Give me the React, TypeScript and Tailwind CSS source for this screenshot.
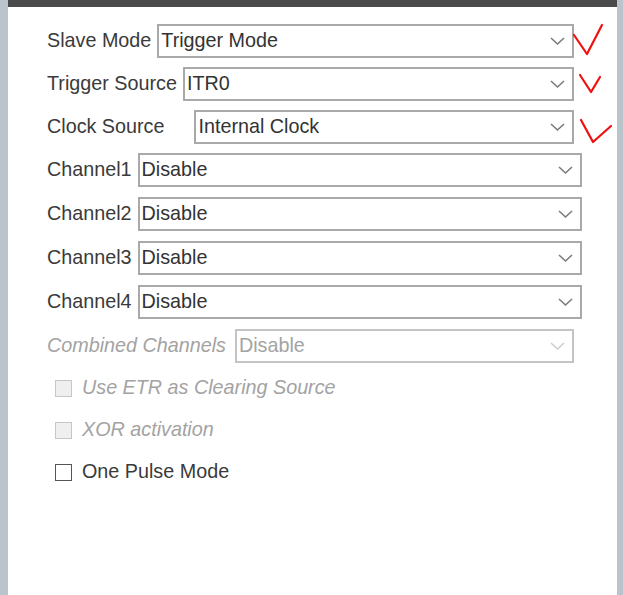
import React from "react";

type Tick = { points: string };

function Chevron({ disabled }: { disabled?: boolean }) {
  return (
    <svg width="15" height="9" viewBox="0 0 15 9" className="shrink-0">
      <polyline points="1,1 7.5,7 14,1" fill="none" stroke={disabled ? "#cfcfcf" : "#7a7a7a"} strokeWidth="1.6" />
    </svg>
  );
}

function Select({
  value,
  disabled,
  tick,
}: {
  value: string;
  disabled?: boolean;
  tick?: Tick;
}) {
  return (
    <div
      className={`relative flex h-[34px] flex-1 items-center justify-between border-2 bg-white pl-[2px] pr-[7px] ${
        disabled ? "border-[#c4c4c4] text-[#a3a3a3]" : "border-[#a9a9a9] text-[#333333]"
      }`}
    >
      <span className="leading-none">{value}</span>
      <Chevron disabled={disabled} />
      {tick ? (
        <svg width="45" height="40" className="absolute left-full top-[-2px] overflow-visible" viewBox="0 0 45 40">
          <polyline points={tick.points} fill="none" stroke="#f01010" strokeWidth="2.2" strokeLinejoin="round" strokeLinecap="round" />
        </svg>
      ) : null}
    </div>
  );
}

function Row({
  label,
  value,
  gap = "gap-[6px]",
  mr = "mr-[43px]",
  disabled,
  tick,
}: {
  label: string;
  value: string;
  gap?: string;
  mr?: string;
  disabled?: boolean;
  tick?: Tick;
}) {
  return (
    <div className={`flex h-[34px] items-center ${gap} ${mr}`}>
      <span className={disabled ? "italic text-[#a3a3a3]" : "text-[#3a3a3a]"}>{label}</span>
      <Select value={value} disabled={disabled} tick={tick} />
    </div>
  );
}

function Check({ label, disabled }: { label: string; disabled?: boolean }) {
  return (
    <div className="flex h-[42px] items-center gap-[10px] pl-[8px]">
      <span
        className={`h-[17px] w-[17px] border ${
          disabled ? "border-[#c6c6c6] bg-[#efefef]" : "border-[#555555] bg-white"
        }`}
      />
      <span className={disabled ? "italic text-[#a3a3a3]" : "text-[#3a3a3a]"}>{label}</span>
    </div>
  );
}

export default function App() {
  return (
    <div className="flex h-[595px] w-[623px] bg-[#b9c4cb] text-[19.75px] font-['Liberation_Sans',Arial,sans-serif]">
      <div className="ml-[8px] flex w-[609px] flex-col bg-white">
        <div className="h-[7px] bg-[#4b4b4b]" />
        <div className="flex flex-col pl-[39px] pt-[17px]">
          <div className="flex flex-col gap-[9px]">
            <Row label="Slave Mode" value="Trigger Mode" tick={{ points: "2,11 15,30 30,1" }} />
            <Row label="Trigger Source" value="ITR0" tick={{ points: "8,8 19,25 28,10" }} />
            <Row label="Clock Source" value="Internal Clock" gap="gap-[30px]" tick={{ points: "9,10 21,32 39,16" }} />
          </div>
          <div className="mt-[9px] flex flex-col gap-[10px]">
            <Row label="Channel1" value="Disable" mr="mr-[35px]" />
            <Row label="Channel2" value="Disable" mr="mr-[35px]" />
            <Row label="Channel3" value="Disable" mr="mr-[35px]" />
            <Row label="Channel4" value="Disable" mr="mr-[35px]" />
            <Row label="Combined Channels" value="Disable" gap="gap-[9px]" disabled />
          </div>
          <div className="mt-[4px] flex flex-col">
            <Check label="Use ETR as Clearing Source" disabled />
            <Check label="XOR activation" disabled />
            <Check label="One Pulse Mode" />
          </div>
        </div>
      </div>
    </div>
  );
}
